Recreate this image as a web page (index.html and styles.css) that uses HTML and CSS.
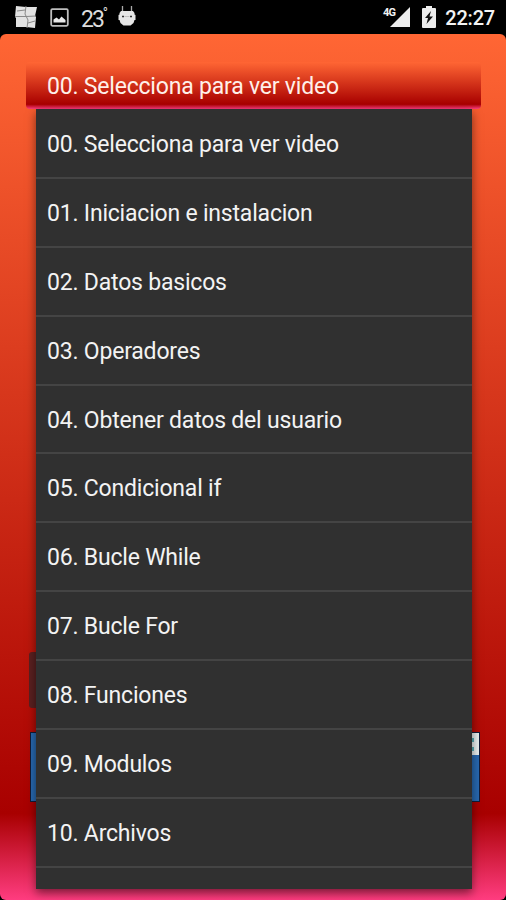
FILE: index.html
```
<!DOCTYPE html>
<html lang="es">
<head>
  <meta charset="UTF-8">
  <meta name="viewport" content="width=device-width, initial-scale=1.0">
  <title>Videos</title>
  <link rel="stylesheet" href="styles.css">
</head>
<body>

  <!-- Barra de estado -->
  <div class="status-bar">
    <div class="status-left">
      <svg class="icon-tiles" width="24" height="24" viewBox="0 0 24 24">
        <path fill="#e2e2e2" d="M2 1l10 1 11 0-2 9 1 1-1 11-9-1-10 0V13l-1-1z"/>
        <path fill="none" stroke="#888" stroke-width="1" d="M12 1l-1 8 3 6-1 8M1 11.500h11l10-.5M3 6l8-1M14 18l7-2"/>
      </svg>
      <svg class="icon-image" width="19" height="19" viewBox="0 0 19 19">
        <rect x="1.2" y="1.2" width="16.6" height="16.6" rx="1.2" fill="none" stroke="#bdbdbd" stroke-width="1.8"/>
        <path fill="#e8e8e8" d="M3.500 14.500v-3l3-2 2.500 2 2.500-3 4 3.500v2.500z"/>
      </svg>
      <span class="temp">23<sup>°</sup></span>
      <svg class="icon-robot" width="18" height="21" viewBox="0 0 18 21">
        <path fill="none" stroke="#aaa" stroke-width="1.300" d="M4.500 1v7M13.500 1v7"/>
        <path fill="#e6e6e6" d="M3 6h12l1.500 2v1.500l1 .5v5h-1l-1 3-3 2.500h-7l-3-2.500-1-3h-1v-5l1-.5V8z"/>
        <path stroke="#333" stroke-width="1.500" d="M4 11.500h2M12 11.500h2"/>
        <path stroke="#c0c0c0" stroke-width="1" d="M6.500 11.500h5"/>
      </svg>
    </div>
    <div class="status-right">
      <span class="network">4G</span>
      <svg class="icon-signal" width="20" height="20" viewBox="0 0 20 20">
        <path fill="#ececec" d="M20 0v20H0z"/>
      </svg>
      <svg class="icon-battery" width="14" height="22" viewBox="0 0 14 22">
        <path fill="#ececec" d="M4 0h6v2h3q1 0 1 1v18q0 1-1 1H1q-1 0-1-1V3q0-1 1-1h3z"/>
        <path fill="#111" d="M9 5l-6 7h3l-1.500 6L11 10.500H7.500z"/>
      </svg>
      <span class="clock">22:27</span>
    </div>
  </div>

  <!-- Pantalla -->
  <div class="screen">
    <div class="spinner">
      <div class="selected">00. Selecciona para ver video</div>
      <ul class="dropdown">
        <li>00. Selecciona para ver video</li>
        <li>01. Iniciacion e instalacion</li>
        <li>02. Datos basicos</li>
        <li>03. Operadores</li>
        <li>04. Obtener datos del usuario</li>
        <li>05. Condicional if</li>
        <li>06. Bucle While</li>
        <li>07. Bucle For</li>
        <li>08. Funciones</li>
        <li>09. Modulos</li>
        <li>10. Archivos</li>
      </ul>
    </div>
    <div class="button"></div>
    <div class="banner"><div class="ad-choices"><i></i><i></i></div></div>
  </div>

</body>
</html>
```
FILE: styles.css
```
* {
  margin: 0;
  padding: 0;
  box-sizing: border-box;
}

body {
  width: 506px;
  height: 900px;
  overflow: hidden;
  background-color: #000;
  font-family: Roboto, sans-serif;
  color: #f3f3f3;
}

/* Barra de estado */
.status-bar {
  display: flex;
  justify-content: space-between;
  height: 34px;
  padding: 0 11px 0 14px;
}

.status-left,
.status-right {
  display: flex;
  align-items: flex-start;
}

.icon-tiles {
  margin-top: 5px;
}

.icon-image {
  margin: 8px 0 0 12px;
}

.temp {
  margin: 5px 0 0 12px;
  width: 26px;
  font-size: 23px;
  line-height: 29px;
  letter-spacing: -2px;
  color: #ddd;
  white-space: nowrap;
}

.temp sup {
  font-size: 14px;
  line-height: 0;
}

.icon-robot {
  margin: 5px 0 0 11px;
}

.network {
  margin-top: 6px;
  font-size: 11px;
  font-weight: bold;
  line-height: 13px;
  letter-spacing: -0.8px;
}

.icon-signal {
  margin: 7px 0 0 -5px;
}

.icon-battery {
  margin: 6px 0 0 12px;
}

.clock {
  margin: 5px 0 0 9px;
  font-size: 20px;
  font-weight: 500;
  line-height: 27px;
  letter-spacing: -0.2px;
}

/* Pantalla */
.screen {
  height: 866px;
  padding: 28px 25px 0 26px;
  border-radius: 6px;
  background: linear-gradient(#ff6634, #a80000 90%, #ff3c80);
}

.spinner {
  position: relative;
  margin-bottom: 543px;
}

.selected {
  height: 47px;
  padding-left: 21px;
  border-radius: 4px;
  background: linear-gradient(#ff6634, #a80000 90%, #ff3c80);
  font-size: 23px;
  line-height: 49px;
  letter-spacing: -0.2px;
  color: #fff0ea;
}

/* Lista desplegable */
.dropdown {
  position: absolute;
  top: 47px;
  left: 10px;
  width: 436px;
  height: 780px;
  padding-top: 1px;
  background-color: #303030;
  box-shadow: 0 4px 9px rgba(0, 0, 0, 0.5);
  list-style: none;
}

.dropdown li {
  height: 68.9px;
  padding-left: 11px;
  border-bottom: 2px solid #444;
  font-size: 23px;
  line-height: 70px;
  letter-spacing: -0.2px;
  white-space: nowrap;
}

/* Controles debajo de la lista */
.button {
  height: 56px;
  margin: 0 3px 24px;
  width: 420px;
  border-radius: 3px;
  background-color: #5a2020;
}

.banner {
  height: 70px;
  margin: 0 1px 0 4px;
  border: 1px solid #131c38;
  background-color: #2869b0;
}

.ad-choices {
  display: flex;
  flex-direction: column;
  align-items: flex-start;
  gap: 5px;
  width: 26px;
  height: 22px;
  margin-left: auto;
  padding: 5px 0 0 18px;
  background-color: #e8eeee;
}

.ad-choices i {
  width: 3px;
  height: 4px;
  background-color: #58aeb5;
}
```
